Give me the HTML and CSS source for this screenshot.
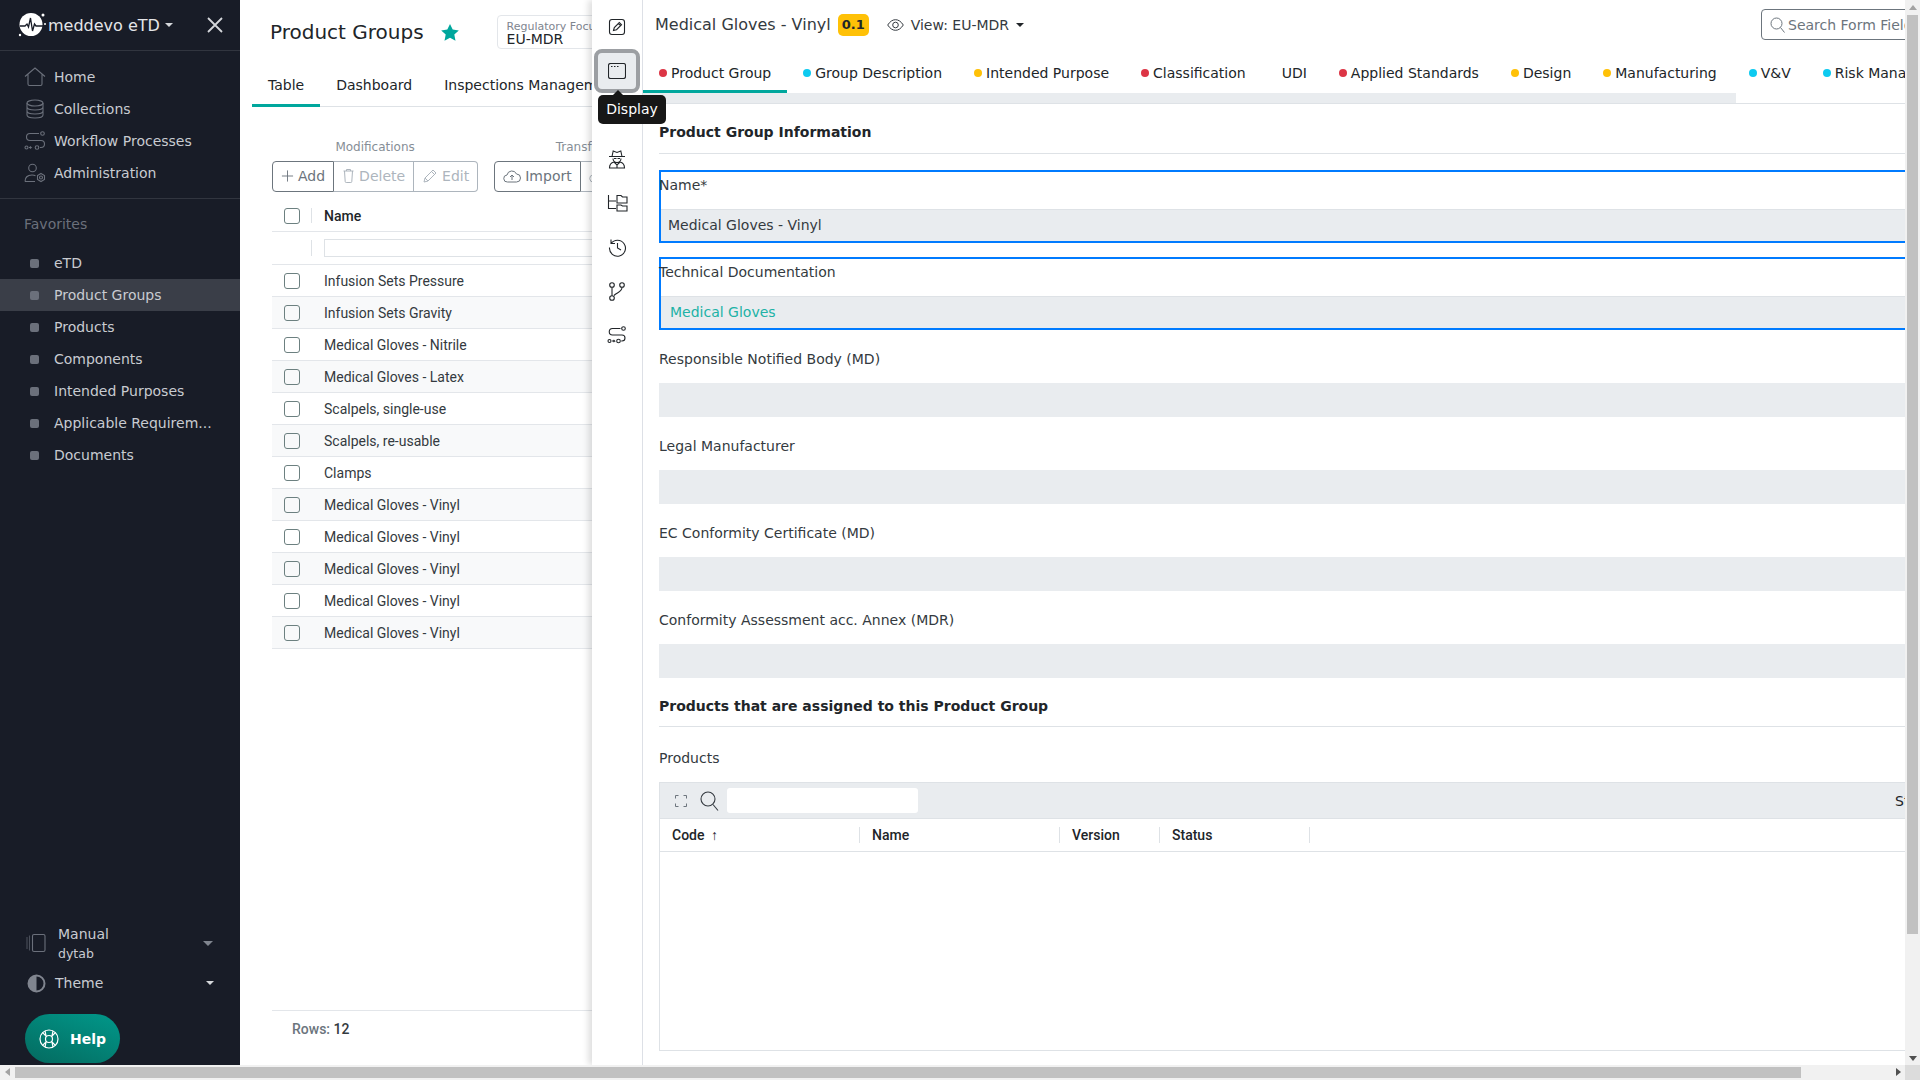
FILE: index.html
```html
<!DOCTYPE html>
<html lang="en">
<head>
  <meta charset="UTF-8">
  <title>Product Groups - meddevo eTD</title>
  <link rel="stylesheet" href="styles.css">
</head>
<body>
  <div class="app">
    <aside class="sidebar">
      <div class="brand">
        <svg class="logo" width="28" height="26" viewBox="0 0 28 26">
          <circle cx="13" cy="12.500" r="11.500" fill="#fff"/>
          <path d="M2 14h5l2-2 1.500 3 2-9 2 13 2-7 1.500 2h8" fill="none" stroke="#181c27" stroke-width="1.300"/>
          <circle cx="25" cy="3" r="1.500" fill="#fff"/>
          <circle cx="2" cy="23" r="1.200" fill="#fff"/>
          <circle cx="27" cy="12" r="1" fill="#fff"/>
        </svg>
        <span class="brand-name">meddevo eTD</span>
        <span class="caret caret-light"></span>
        <svg class="close" width="16" height="16" viewBox="0 0 16 16"><path d="M1 1l14 14M15 1L1 15" stroke="#d5d7db" stroke-width="1.800"/></svg>
      </div>

      <nav class="nav">
        <a class="nav-item">
          <svg width="22" height="20" viewBox="0 0 22 20" fill="none" stroke="#6b707b" stroke-width="1.100"><path d="M1 9.500 11 1l10 8.500M4 7.500V17a1.500 1.500 0 0 0 1.500 1.500h11A1.500 1.500 0 0 0 18 17V7.500"/></svg>
          Home
        </a>
        <a class="nav-item">
          <svg width="22" height="20" viewBox="0 0 22 20" fill="none" stroke="#6b707b" stroke-width="1.100"><ellipse cx="11" cy="4" rx="8" ry="3"/><path d="M3 4v12c0 1.700 3.600 3 8 3s8-1.300 8-3V4M3 8c0 1.700 3.600 3 8 3s8-1.300 8-3M3 12c0 1.700 3.600 3 8 3s8-1.300 8-3"/></svg>
          Collections
        </a>
        <a class="nav-item">
          <svg width="22" height="20" viewBox="0 0 22 20" fill="none" stroke="#6b707b" stroke-width="1.100"><path d="M15 2.500H6a3.500 3.500 0 0 0 0 7h11a3.500 3.500 0 0 1 0 7h-1"/><circle cx="18.500" cy="2.500" r="1.800"/><circle cx="2.500" cy="16.500" r="1.500"/><path d="M5 16.500h2l-1-1m1 1-1 1"/><circle cx="13" cy="16.500" r="1.800"/></svg>
          Workflow Processes
        </a>
        <a class="nav-item">
          <svg width="22" height="20" viewBox="0 0 22 20" fill="none" stroke="#6b707b" stroke-width="1.100"><circle cx="8.500" cy="5" r="3.800"/><path d="M1 18.500c0-4 2.500-6.500 7-6.500 1.500 0 2.500.2 3.500.7M1 18.500h10"/><circle cx="17" cy="14.500" r="1.500"/><path d="M17 10.500l3.500 2v4l-3.500 2-3.500-2v-4z"/></svg>
          Administration
        </a>
      </nav>

      <div class="favorites">
        <div class="favorites-title">Favorites</div>
        <a class="fav-item"><span class="fav-dot"></span>eTD</a>
        <a class="fav-item active"><span class="fav-dot"></span>Product Groups</a>
        <a class="fav-item"><span class="fav-dot"></span>Products</a>
        <a class="fav-item"><span class="fav-dot"></span>Components</a>
        <a class="fav-item"><span class="fav-dot"></span>Intended Purposes</a>
        <a class="fav-item"><span class="fav-dot"></span>Applicable Requirem...</a>
        <a class="fav-item"><span class="fav-dot"></span>Documents</a>
      </div>

      <div class="sidebar-bottom">
        <div class="manual">
          <svg width="20" height="20" viewBox="0 0 20 20" fill="none" stroke="#6b707b" stroke-width="1.100"><rect x="6.500" y="1.500" width="12.500" height="17" rx="1.500"/><path d="M3.500 2.500v15M1 4v12" stroke="#4a4f5a"/></svg>
          <div class="manual-text">
            <div class="manual-name">Manual</div>
            <div class="manual-sub">dytab</div>
          </div>
          <span class="caret caret-grey"></span>
        </div>
        <div class="theme">
          <svg width="19" height="19" viewBox="0 0 19 19"><circle cx="9.500" cy="9.500" r="8" fill="none" stroke="#80858f" stroke-width="2"/><path d="M9.500 1.500a8 8 0 0 0 0 16z" fill="#80858f"/></svg>
          <span class="theme-name">Theme</span>
          <span class="caret caret-light"></span>
        </div>
        <button class="help">
          <svg width="20" height="20" viewBox="0 0 20 20" fill="none" stroke="#fff" stroke-width="1.200"><circle cx="10" cy="10" r="9"/><circle cx="10" cy="10" r="3.500"/><path d="M3.600 3.600l3.900 3.900M16.400 3.600l-3.900 3.900M3.600 16.400l3.900-3.900M16.400 16.400l-3.900-3.900M6 1.900l1 5M14 1.900l-1 5M6 18.100l1-5M14 18.100l-1-5"/></svg>
          Help
        </button>
      </div>
    </aside>

    <main class="page">
      <div class="page-head">
        <h1 class="page-title">Product Groups</h1>
        <svg class="star" width="18" height="17" viewBox="0 0 18 17"><path d="M9 0l2.700 5.600 6.100.8-4.500 4.200 1.200 6.100L9 13.700l-5.500 3 1.200-6.100L.2 6.400l6.100-.8z" fill="#00a79d"/></svg>
        <div class="focus">
          <div class="focus-label">Regulatory Focus</div>
          <div class="focus-value">EU-MDR</div>
        </div>
      </div>

      <div class="page-tabs">
        <a class="page-tab active">Table</a>
        <a class="page-tab">Dashboard</a>
        <a class="page-tab">Inspections Management</a>
      </div>

      <div class="toolbar">
        <div class="tool-group">
          <div class="tool-label">Modifications</div>
          <div class="btn-group">
            <button class="btn">
              <svg width="13" height="14" viewBox="0 0 14 14"><path d="M7 1v12M1 7h12" stroke="#6c757d" stroke-width="1"/></svg>
              Add
            </button>
            <button class="btn btn-off">
              <svg width="13" height="15" viewBox="0 0 12 15" fill="none" stroke="#adb5bd"><path d="M1 3h10M2 3l.7 10.500a1 1 0 0 0 1 1h4.600a1 1 0 0 0 1-1L10 3M4 3V1.500h4V3"/></svg>
              Delete
            </button>
            <button class="btn btn-off">
              <svg width="16" height="14" viewBox="0 0 14 14" fill="none" stroke="#adb5bd"><path d="M1 13l1-4 8-8 3 3-8 8zM8.500 2.500l3 3M2 9l3 3"/></svg>
              Edit
            </button>
          </div>
        </div>
        <div class="tool-group">
          <div class="tool-label">Transfer</div>
          <div class="btn-group">
            <button class="btn">
              <svg width="18" height="14" viewBox="0 0 18 14" fill="none" stroke="#6c757d"><path d="M4.500 13a3.500 3.500 0 0 1-.5-7A5 5 0 0 1 13.500 5a4 4 0 0 1 0 8zM9 11V6M7 8l2-2 2 2"/></svg>
              Import
            </button>
            <button class="btn btn-off">
              <svg width="18" height="14" viewBox="0 0 18 14" fill="none" stroke="#adb5bd"><path d="M4.500 13a3.500 3.500 0 0 1-.5-7A5 5 0 0 1 13.500 5a4 4 0 0 1 0 8zM9 6v5M7 9l2 2 2-2"/></svg>
              Export
            </button>
          </div>
        </div>
      </div>

      <div class="list">
        <div class="list-row list-head">
          <span class="check-cell"><span class="check"></span></span>
          <span class="list-name">Name</span>
        </div>
        <div class="list-row list-filter">
          <span class="check-cell"></span>
          <span class="filter-input"></span>
        </div>
        <div class="list-row"><span class="check-cell"><span class="check"></span></span><span class="list-name">Infusion Sets Pressure</span></div>
        <div class="list-row"><span class="check-cell"><span class="check"></span></span><span class="list-name">Infusion Sets Gravity</span></div>
        <div class="list-row"><span class="check-cell"><span class="check"></span></span><span class="list-name">Medical Gloves - Nitrile</span></div>
        <div class="list-row"><span class="check-cell"><span class="check"></span></span><span class="list-name">Medical Gloves - Latex</span></div>
        <div class="list-row"><span class="check-cell"><span class="check"></span></span><span class="list-name">Scalpels, single-use</span></div>
        <div class="list-row"><span class="check-cell"><span class="check"></span></span><span class="list-name">Scalpels, re-usable</span></div>
        <div class="list-row"><span class="check-cell"><span class="check"></span></span><span class="list-name">Clamps</span></div>
        <div class="list-row"><span class="check-cell"><span class="check"></span></span><span class="list-name">Medical Gloves - Vinyl</span></div>
        <div class="list-row"><span class="check-cell"><span class="check"></span></span><span class="list-name">Medical Gloves - Vinyl</span></div>
        <div class="list-row"><span class="check-cell"><span class="check"></span></span><span class="list-name">Medical Gloves - Vinyl</span></div>
        <div class="list-row"><span class="check-cell"><span class="check"></span></span><span class="list-name">Medical Gloves - Vinyl</span></div>
        <div class="list-row"><span class="check-cell"><span class="check"></span></span><span class="list-name">Medical Gloves - Vinyl</span></div>
      </div>

      <div class="rows-count">Rows: <b>12</b></div>
    </main>

    <!-- drawer lies over the page -->
    <section class="drawer">
      <div class="rail">
        <a class="rail-btn">
          <svg width="18" height="18" viewBox="0 0 18 18" fill="none" stroke="#212529" stroke-width="1.100"><rect x="1.500" y="1.500" width="15" height="15" rx="2.500"/><path d="M5.500 12.500l.8-3 5-5 2.200 2.200-5 5zM10.300 5.500l2.200 2.200"/></svg>
        </a>
        <a class="rail-btn rail-active">
          <svg width="18" height="16" viewBox="0 0 18 16" fill="none" stroke="#212529" stroke-width="1.100"><rect x=".5" y=".5" width="17" height="15" rx="2"/><path d="M3 3.500h1.500M6 3.500h1.500M9 3.500h1.500" stroke-width="1.200"/></svg>
        </a>
        <a class="rail-btn"></a>
        <a class="rail-btn">
          <svg width="18" height="20" viewBox="0 0 18 20" fill="none" stroke="#212529" stroke-width="1.100"><path d="M1 7.500h16M4 7.500l1.200-5.500L9 3.500 12.800 2 14 7.500M5 9.500a4 4 0 0 0 8 0M1.500 19c0-3.500 2-5.500 4.500-6l3 3 3-3c2.500.5 4.500 2.500 4.500 6zM6 9.500h2.500M9.500 9.500H12M9 16v3"/></svg>
        </a>
        <a class="rail-btn">
          <svg width="21" height="18" viewBox="0 0 21 18" fill="none" stroke="#212529" stroke-width="1.100"><path d="M1.500 1v13.500H9M1.500 7H9"/><path d="M10 3V1.500h4L15.500 3h4.500v6H10zM10 12v-1h4l1.500 1h4.500v5H10z"/></svg>
        </a>
        <a class="rail-btn">
          <svg width="19" height="19" viewBox="0 0 19 19" fill="none" stroke="#212529" stroke-width="1.100"><path d="M3 5.500A8 8 0 1 1 1.500 9.500M3 1.500v4h4M9.500 5v5l3.500 2"/></svg>
        </a>
        <a class="rail-btn">
          <svg width="16" height="19" viewBox="0 0 16 19" fill="none" stroke="#212529" stroke-width="1.100"><circle cx="3" cy="3" r="2.300"/><circle cx="13" cy="3" r="2.300"/><circle cx="3" cy="16" r="2.300"/><path d="M3 5.300v8.400M13 5.300C13 10 8 10.500 5 13.500"/></svg>
        </a>
        <a class="rail-btn">
          <svg width="20" height="18" viewBox="0 0 20 18" fill="none" stroke="#212529" stroke-width="1.100"><path d="M13.500 2.500H5.500a3.200 3.200 0 0 0 0 6.500h9.500a3 3 0 0 1 0 6h-.8"/><circle cx="16.500" cy="2.500" r="1.800"/><circle cx="2.500" cy="15" r="1.500"/><path d="M5 15h2.500l-1-1m1 1-1 1"/><circle cx="11.500" cy="15" r="1.800"/></svg>
        </a>
        <div class="tooltip">Display</div>
      </div>

      <div class="detail">
        <div class="detail-head">
          <span class="detail-title">Medical Gloves - Vinyl</span>
          <span class="version">0.1</span>
          <span class="view">
            <svg width="17" height="12" viewBox="0 0 17 12" fill="none" stroke="#343a40" stroke-width="1"><path d="M.7 6C3 2.500 5.500.7 8.500.7s5.500 1.800 7.800 5.300c-2.300 3.500-4.800 5.300-7.800 5.300S3 9.500.7 6z"/><circle cx="8.500" cy="6" r="2.800"/></svg>
            View: EU-MDR
            <span class="caret caret-dark"></span>
          </span>
          <div class="search-form">
            <svg width="15" height="16" viewBox="0 0 15 16" fill="none" stroke="#6c757d" stroke-width="1"><circle cx="6.500" cy="6.500" r="5.500"/><path d="M10.500 10.500l4 5"/></svg>
            <span>Search Form Field</span>
          </div>
        </div>

        <div class="form-tabs">
          <a class="form-tab active"><span class="dot dot-red"></span>Product Group</a>
          <a class="form-tab"><span class="dot dot-blue"></span>Group Description</a>
          <a class="form-tab"><span class="dot dot-yellow"></span>Intended Purpose</a>
          <a class="form-tab"><span class="dot dot-red"></span>Classification</a>
          <a class="form-tab form-tab-plain">UDI</a>
          <a class="form-tab"><span class="dot dot-red"></span>Applied Standards</a>
          <a class="form-tab"><span class="dot dot-yellow"></span>Design</a>
          <a class="form-tab"><span class="dot dot-yellow"></span>Manufacturing</a>
          <a class="form-tab"><span class="dot dot-blue"></span>V&amp;V</a>
          <a class="form-tab"><span class="dot dot-blue"></span>Risk Management</a>
        </div>
        <div class="tabs-scroll"><div class="tabs-thumb"></div></div>

        <div class="form">
          <h2 class="section-title">Product Group Information</h2>

          <div class="field field-hl">
            <label class="field-label">Name*</label>
            <div class="field-value">Medical Gloves - Vinyl</div>
          </div>
          <div class="field field-hl">
            <label class="field-label">Technical Documentation</label>
            <div class="field-value field-link">Medical Gloves</div>
          </div>
          <div class="field">
            <label class="field-label">Responsible Notified Body (MD)</label>
            <div class="field-value"></div>
          </div>
          <div class="field">
            <label class="field-label">Legal Manufacturer</label>
            <div class="field-value"></div>
          </div>
          <div class="field">
            <label class="field-label">EC Conformity Certificate (MD)</label>
            <div class="field-value"></div>
          </div>
          <div class="field">
            <label class="field-label">Conformity Assessment acc. Annex (MDR)</label>
            <div class="field-value"></div>
          </div>

          <h2 class="section-title section-second">Products that are assigned to this Product Group</h2>

          <label class="field-label products-label">Products</label>
          <div class="grid">
            <div class="grid-bar">
              <svg width="12" height="12" viewBox="0 0 12 12" fill="none" stroke="#6c757d"><path d="M.5 3.500v-3h3M8.500.5h3v3M11.500 8.500v3h-3M3.500 11.500h-3v-3"/></svg>
              <svg class="grid-search" width="19" height="20" viewBox="0 0 19 20" fill="none" stroke="#343a40" stroke-width="1.100"><circle cx="8" cy="8" r="7"/><path d="M13 13.500l5 6"/></svg>
              <span class="grid-input"></span>
              <span class="grid-s">Status</span>
            </div>
            <div class="grid-head">
              <span class="col col-code">Code <span class="arrow">↑</span></span>
              <span class="col col-name">Name</span>
              <span class="col col-version">Version</span>
              <span class="col col-status">Status</span>
            </div>
          </div>
        </div>
      </div>
    </section>

    <div class="vscroll">
      <span class="arrow-up"></span>
      <div class="vthumb"></div>
      <span class="arrow-down"></span>
    </div>
    <div class="hscroll">
      <span class="arrow-left"></span>
      <div class="hthumb"></div>
      <span class="arrow-right"></span>
    </div>
    <div class="corner"></div>
  </div>
</body>
</html>
```

FILE: styles.css
```css
* {
  box-sizing: border-box;
}

html, body {
  margin: 0;
  padding: 0;
  height: 100%;
  overflow: hidden;
}

body {
  font-family: "DejaVu Sans", sans-serif;
  font-size: 14px;
  color: #212529;
  background: #fff;
}

.app {
  position: relative;
  display: grid;
  grid-template-columns: 240px 1fr 15px;
  grid-template-rows: 1065px 15px;
  width: 1920px;
  height: 1080px;
  overflow: hidden;
}

.caret {
  display: inline-block;
  width: 0;
  height: 0;
  border-left: 4px solid transparent;
  border-right: 4px solid transparent;
}

.caret-light { border-top: 4px solid #d5d7db; }
.caret-grey { border-top: 5px solid #80858f; border-left-width: 5px; border-right-width: 5px; }
.caret-dark { border-top: 4px solid #212529; }

/* sidebar */
.sidebar {
  display: flex;
  flex-direction: column;
  background: #181c27;
  color: #c8cbd1;
}

.brand {
  display: flex;
  align-items: center;
  height: 51px;
  padding-left: 18px;
  border-bottom: 1px solid #31353f;
}

.brand-name {
  margin-left: 2px;
  font-size: 16px;
  color: #e4e5e8;
}

.brand .caret {
  margin-left: 5px;
}

.close {
  margin-left: 34px;
}

.nav {
  height: 148px;
  padding: 10px 0;
  border-bottom: 1px solid #31353f;
}

.nav-item {
  display: flex;
  align-items: center;
  gap: 8px;
  height: 32px;
  padding-left: 24px;
}

.favorites {
  padding-top: 9px;
}

.favorites-title {
  height: 32px;
  padding-left: 24px;
  line-height: 32px;
  color: #6b707b;
  margin-bottom: 7px;
}

.fav-item {
  display: flex;
  align-items: center;
  height: 32px;
  padding-left: 30px;
}

.fav-item.active {
  background: #3a3e48;
}

.fav-dot {
  width: 9px;
  height: 9px;
  margin-right: 15px;
  border-radius: 2px;
  background: #6b707b;
}

.sidebar-bottom {
  margin-top: auto;
  padding-left: 25px;
  padding-bottom: 2px;
}

.manual {
  display: flex;
  align-items: center;
  height: 44px;
  margin-bottom: 3px;
  padding-left: 1px;
}

.manual-text {
  margin-left: 12px;
}

.manual-name {
  line-height: 20px;
}

.manual-sub {
  font-size: 12.500px;
  line-height: 19px;
}

.manual .caret {
  margin-left: auto;
  margin-right: 27px;
}

.theme {
  display: flex;
  align-items: center;
  height: 30px;
  margin-bottom: 16px;
  padding-left: 2px;
}

.theme-name {
  margin-left: 9px;
}

.theme .caret {
  margin-left: auto;
  margin-right: 26px;
}

.help {
  display: flex;
  align-items: center;
  gap: 11px;
  width: 95px;
  height: 49px;
  padding-left: 14px;
  border: none;
  border-radius: 25px;
  background: linear-gradient(20deg, #046a5f, #01988a);
  color: #fff;
  font-family: inherit;
  font-size: 14px;
  font-weight: bold;
}

/* page behind the drawer */
.page {
  display: flex;
  flex-direction: column;
  min-width: 0;
  overflow: hidden;
  padding-left: 12px;
}

.page-head {
  display: flex;
  align-items: center;
  height: 64px;
  padding-left: 18px;
}

.page-title {
  margin: 0;
  font-size: 20px;
  font-weight: normal;
  white-space: nowrap;
}

.star {
  margin-left: 17px;
}

.focus {
  flex: none;
  width: 120px;
  height: 34px;
  margin-left: 38px;
  padding: 4px 9px;
  border: 1px solid #e3e6ea;
  border-radius: 4px;
}

.focus-label {
  font-size: 11px;
  line-height: 13px;
  color: #80858f;
  white-space: nowrap;
}

.focus-value {
  font-size: 14px;
  line-height: 13px;
}

.page-tabs {
  display: flex;
  height: 43px;
  border-bottom: 1px solid #dee2e6;
}

.page-tab {
  flex: none;
  height: 43px;
  padding: 13px 16px 0;
  white-space: nowrap;
}

.page-tab.active {
  border-bottom: 3px solid #00a79d;
}

.toolbar {
  display: flex;
  gap: 16px;
  margin-top: 30px;
  margin-left: 20px;
}

.tool-label {
  height: 24px;
  font-size: 12px;
  line-height: 21px;
  color: #868e96;
  text-align: center;
}

.btn-group {
  display: flex;
  height: 31px;
}

.btn {
  display: flex;
  align-items: center;
  gap: 4px;
  padding: 0 8px 2px;
  border: 1px solid #6c757d;
  border-left-width: 0;
  background: #fff;
  color: #6c757d;
  font-family: inherit;
  font-size: 14px;
  white-space: nowrap;
}

.btn:first-child {
  border-left-width: 1px;
  border-radius: 4px 0 0 4px;
}

.btn:last-child {
  border-radius: 0 4px 4px 0;
}

.btn-off {
  border-color: #adb5bd;
  color: #adb5bd;
}

.list {
  margin-top: 8px;
  margin-left: 20px;
  font-family: Roboto, sans-serif;
}

.list-row {
  display: flex;
  align-items: center;
  height: 32px;
  border-bottom: 1px solid #e3e6ea;
  width: 700px;
}

.list-row:nth-child(even) {
  background: #f8f9fa;
}

.list-head, .list-filter, .list-filter:nth-child(even) {
  background: #fff;
}

.list-filter {
  height: 33px;
}

.list-head .list-name {
  font-weight: 500;
  color: #212529;
}

.check-cell {
  display: flex;
  align-items: center;
  width: 52px;
  height: 100%;
  padding-left: 12px;
}

.list-head .check-cell, .list-filter .check-cell {
  position: relative;
}

.list-head .check-cell::after, .list-filter .check-cell::after {
  content: "";
  position: absolute;
  left: 39px;
  top: 8px;
  bottom: 8px;
  border-left: 1px solid #dee2e6;
}

.check {
  width: 16px;
  height: 16px;
  border: 1px solid #6c8080;
  border-radius: 3px;
}

.list-name {
  color: #343a40;
}

.filter-input {
  flex: 1;
  height: 18px;
  border: 1px solid #dee2e6;
}

.rows-count {
  margin: auto 0 0 20px;
  height: 55px;
  padding: 10px 0 0 20px;
  border-top: 1px solid #e3e6ea;
  font-family: Roboto, sans-serif;
  font-weight: 500;
  color: #6c757d;
}

.rows-count b {
  color: #343a40;
  font-weight: 500;
}

/* drawer */
.drawer {
  position: absolute;
  left: 592px;
  top: 0;
  width: 1313px;
  height: 1065px;
  display: flex;
  background: #fff;
  box-shadow: -4px 0 6px rgba(0, 0, 0, 0.12);
}

.rail {
  position: relative;
  flex: none;
  width: 51px;
  padding-top: 5px;
  border-right: 1px solid #dde0e6;
}

.rail-btn {
  display: flex;
  align-items: center;
  justify-content: center;
  width: 46px;
  height: 44px;
  margin-left: 2px;
}

.rail-active {
  background: #e9ecef;
  border: 4px solid #9c9fa3;
  border-radius: 8px;
}

.tooltip {
  position: absolute;
  left: 6px;
  top: 95px;
  width: 68px;
  height: 29px;
  border-radius: 5px;
  background: #171717;
  color: #fff;
  line-height: 29px;
  text-align: center;
}

.tooltip::before {
  content: "";
  position: absolute;
  left: 15px;
  top: -5px;
  border-left: 5px solid transparent;
  border-right: 5px solid transparent;
  border-bottom: 5px solid #171717;
}

.detail {
  flex: 1;
  min-width: 0;
  overflow: hidden;
}

.detail-head {
  display: flex;
  align-items: center;
  height: 49px;
  padding-left: 12px;
}

.detail-title {
  font-size: 16px;
  color: #343a40;
  white-space: nowrap;
}

.version {
  width: 31px;
  height: 22px;
  margin-left: 7px;
  border-radius: 5px;
  background: #ffc107;
  font-size: 13px;
  font-weight: bold;
  line-height: 22px;
  text-align: center;
}

.view {
  display: flex;
  align-items: center;
  gap: 7px;
  margin-left: 18px;
  white-space: nowrap;
  color: #343a40;
}

.view .caret {
  margin-left: 0;
}

.search-form {
  display: flex;
  align-items: center;
  gap: 3px;
  flex: none;
  width: 160px;
  height: 31px;
  margin-left: auto;
  margin-right: -16px;
  padding-left: 8px;
  border: 1px solid #6c757d;
  border-radius: 4px;
  color: #6c757d;
  white-space: nowrap;
  overflow: hidden;
}

.form-tabs {
  display: flex;
  height: 44px;
  overflow: hidden;
}

.form-tab {
  display: flex;
  align-items: center;
  flex: none;
  height: 44px;
  padding: 3px 16px 0;
  white-space: nowrap;
}

.form-tab.active {
  padding-top: 6px;
  border-bottom: 3px solid #00a79d;
}

.form-tab-plain {
  padding-left: 20px;
}

.dot {
  width: 8px;
  height: 8px;
  margin-right: 4px;
  border-radius: 50%;
}

.dot-red { background: #dc3545; }
.dot-blue { background: #0dcaf0; }
.dot-yellow { background: #ffc107; }

.tabs-scroll {
  height: 11px;
  border-bottom: 1px solid #dee2e6;
}

.tabs-thumb {
  width: 1093px;
  height: 10px;
  background: #e9ecef;
}

.form {
  padding-left: 16px;
}

.section-title {
  margin: 0;
  height: 50px;
  padding-top: 20px;
  border-bottom: 1px solid #dee2e6;
  font-size: 14px;
  font-weight: bold;
  line-height: 17px;
}

.field {
  height: 87px;
  padding-top: 3px;
}

.section-title + .field {
  margin-top: 16px;
}

.field-label {
  display: block;
  height: 36px;
  line-height: 24px;
  color: #343a40;
}

.field-value {
  height: 34px;
  margin-right: -1px;
  padding: 0 7px;
  background: #e9ecef;
  line-height: 32px;
  color: #343a40;
}

.field-link {
  padding-left: 9px;
  color: #20b2a6;
}

.field-hl {
  height: 73px;
  margin-bottom: 14px;
  padding-top: 0;
  border: 2px solid #007bff;
  border-right: none;
}

.field-hl .field-label {
  height: 37px;
  margin-left: -2px;
  padding-top: 1px;
}

.field-hl .field-value {
  height: 32px;
  border-top: 1px solid #dee2e6;
  line-height: 30px;
}

.section-second {
  height: 44px;
  padding-top: 15px;
  margin-top: -9px;
}

.products-label {
  height: 55px;
  padding-top: 19px;
}

.grid {
  height: 269px;
  border: 1px solid #dee2e6;
  border-right: none;
}

.grid-bar {
  display: flex;
  align-items: center;
  height: 36px;
  padding-left: 15px;
  background: #e9ecef;
  border-bottom: 1px solid #dee2e6;
  overflow: hidden;
}

.grid-search {
  margin-left: 13px;
}

.grid-input {
  width: 191px;
  height: 25px;
  margin-left: 8px;
  border-radius: 3px;
  background: #fff;
}

.grid-s {
  margin-left: auto;
  margin-right: -36px;
  width: 46px;
}

.grid-head {
  display: flex;
  align-items: center;
  height: 33px;
  border-bottom: 1px solid #dee2e6;
  font-family: Roboto, sans-serif;
  font-weight: 500;
}

.col {
  flex: none;
  height: 16px;
  line-height: 16px;
  padding-left: 12px;
  border-right: 1px solid #dee2e6;
}

.col-code { width: 200px; }
.col-name { width: 200px; }
.col-version { width: 100px; }
.col-status { width: 150px; }

.arrow {
  margin-left: 3px;
  font-weight: normal;
  font-size: 14px;
}

/* fake browser scrollbars */
.vscroll {
  grid-column: 3;
  grid-row: 1;
  position: relative;
  background: #f1f1f1;
}

.vthumb {
  position: absolute;
  left: 2px;
  top: 15px;
  width: 11px;
  height: 919px;
  background: #c1c1c1;
}

.hscroll {
  grid-column: 1 / 3;
  grid-row: 2;
  position: relative;
  background: #f1f1f1;
}

.hthumb {
  position: absolute;
  left: 15px;
  top: 2px;
  width: 1786px;
  height: 11px;
  background: #c1c1c1;
}

.corner {
  background: #dcdcdc;
}

.arrow-up, .arrow-down, .arrow-left, .arrow-right {
  position: absolute;
  width: 0;
  height: 0;
  border: 4px solid transparent;
}

.arrow-up { left: 4px; top: 1px; border-bottom: 5px solid #a3a3a3; }
.arrow-down { left: 4px; bottom: 0; border-top: 5px solid #505050; }
.arrow-left { left: 1px; top: 3px; border-right: 5px solid #a3a3a3; }
.arrow-right { right: 0; top: 3px; border-left: 5px solid #505050; }
```
